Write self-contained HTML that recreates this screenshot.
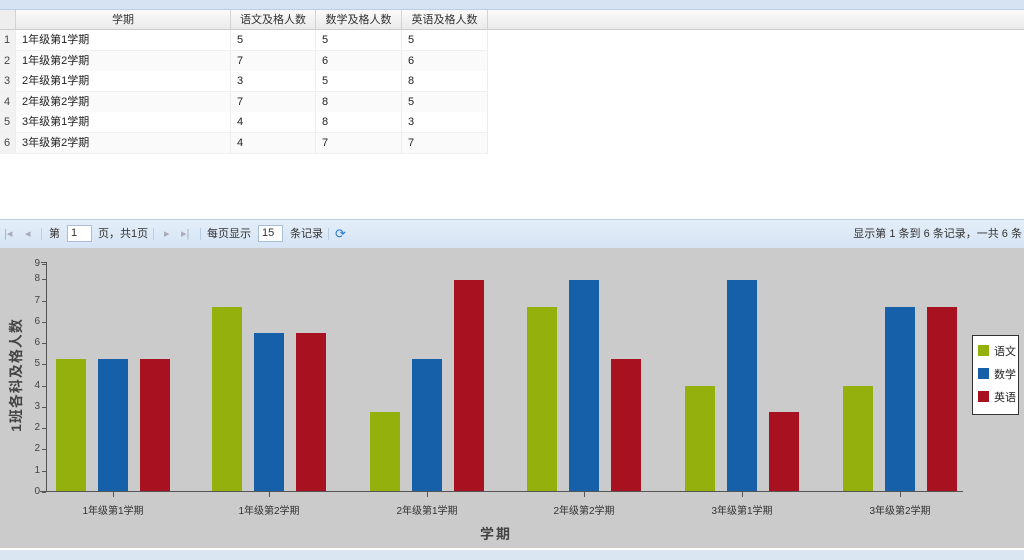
<!DOCTYPE html>
<html><head><meta charset="utf-8"><style>
*{margin:0;padding:0;box-sizing:border-box}
body{width:1024px;height:560px;overflow:hidden;background:#fff;font-family:"Liberation Sans","Noto Sans CJK SC",sans-serif;font-size:11px;color:#222;position:relative}
.a{position:absolute}
.c{position:absolute;height:21px;line-height:21px;padding-left:6px;border-right:1px solid #ededed;border-bottom:1px solid #f0f0f0}
.rn{background:#f2f2f2;color:#444;padding-left:4px}
.h{position:absolute;top:10px;height:20px;line-height:20px;text-align:center;background:linear-gradient(#fbfbfb,#eaeaea);border-right:1px solid #d3d3d3;border-bottom:1px solid #ccc;color:#333}
.bar{position:absolute;width:30px}
.g{background:#94b00c}.b{background:#1560a8}.r{background:#a8111f}
.yl{position:absolute;left:30px;width:10px;text-align:right;font-size:10px;color:#444;line-height:10px}
.xl{position:absolute;top:502px;width:120px;text-align:center;font-size:10px;color:#333}
</style></head><body>
<div class="a" style="left:0;top:0;width:1024px;height:10px;background:#d5e3f3;border-bottom:1px solid #b9cde5"></div>
<div class="h" style="left:0;width:16px;background:#eee"></div>
<div class="h" style="left:16px;width:215px">学期</div>
<div class="h" style="left:231px;width:85px">语文及格人数</div>
<div class="h" style="left:316px;width:86px">数学及格人数</div>
<div class="h" style="left:402px;width:86px">英语及格人数</div>
<div class="h" style="left:488px;width:536px;border-right:none"></div>
<div id="rows"></div>
<script>
var d=[["1年级第1学期",5,5,5],["1年级第2学期",7,6,6],["2年级第1学期",3,5,8],["2年级第2学期",7,8,5],["3年级第1学期",4,8,3],["3年级第2学期",4,7,7]];
var h="";d.forEach(function(r,i){var t=30+i*20.5;var bg=i%2?"#fafafa":"#fff";
h+='<div class="c rn" style="left:0;top:'+t+'px;width:16px">'+(i+1)+'</div>';
h+='<div class="c" style="left:16px;top:'+t+'px;width:215px;background:'+bg+'">'+r[0]+'</div>';
h+='<div class="c" style="left:231px;top:'+t+'px;width:85px;background:'+bg+'">'+r[1]+'</div>';
h+='<div class="c" style="left:316px;top:'+t+'px;width:86px;background:'+bg+'">'+r[2]+'</div>';
h+='<div class="c" style="left:402px;top:'+t+'px;width:86px;background:'+bg+'">'+r[3]+'</div>';});
document.getElementById("rows").innerHTML=h;
</script>
<div class="a" style="left:0;top:219px;width:1024px;height:29px;background:linear-gradient(#e4eef9,#d6e4f4);border-top:1px solid #b9cde5;color:#333;line-height:28px">
<span class="a" style="left:4px;color:#aab">|◂</span><span class="a" style="left:25px;color:#aab">◂</span>
<span class="a" style="left:41px;top:8px;height:12px;border-left:1px solid #b9cde5"></span>
<span class="a" style="left:49px">第</span>
<span class="a" style="left:67px;top:5px;width:25px;height:17px;background:#fff;border:1px solid #a9bfd6;line-height:15px;padding-left:3px">1</span>
<span class="a" style="left:98px">页，共1页</span>
<span class="a" style="left:153px;top:8px;height:12px;border-left:1px solid #b9cde5"></span>
<span class="a" style="left:164px;color:#aab">▸</span><span class="a" style="left:181px;color:#aab">▸|</span>
<span class="a" style="left:200px;top:8px;height:12px;border-left:1px solid #b9cde5"></span>
<span class="a" style="left:207px">每页显示</span>
<span class="a" style="left:258px;top:5px;width:25px;height:17px;background:#fff;border:1px solid #a9bfd6;line-height:15px;padding-left:3px">15</span>
<span class="a" style="left:290px">条记录</span>
<span class="a" style="left:328px;top:8px;height:12px;border-left:1px solid #b9cde5"></span>
<span class="a" style="left:335px;color:#2a7bd0;font-size:13px">⟳</span>
<span class="a" style="right:2px">显示第 1 条到 6 条记录，一共 6 条</span>
</div>
<div class="a" style="left:0;top:248px;width:1024px;height:300px;background:#cbcbcb"></div>
<div class="a" style="left:0;top:548px;width:1024px;height:12px;background:#dbe6f3;border-top:2px solid #fff"></div>
<div class="a" style="left:46px;top:262px;width:1px;height:230px;background:#555"></div>
<div class="a" style="left:41px;top:262px;width:5px;height:1px;background:#555"></div>
<div class="a" style="left:40px;top:491px;width:923px;height:1px;background:#555"></div>
<div id="chart"></div>
<script>
var ys=[[0,492],[1,471],[2,449],[2,428],[3,407],[4,386],[5,364],[6,343],[6,322],[7,301],[8,279],[9,264]];
var s="";ys.forEach(function(v){s+='<div class="yl" style="top:'+(v[1]-5)+'px">'+v[0]+'</div><div class="a" style="left:42px;top:'+v[1]+'px;width:4px;height:1px;background:#555"></div>';});
var tp={3:412,4:386,5:359,6:333,7:307,8:280};
var gx=[56,212,370,527,685,843],cl=["g","b","r"];
d.forEach(function(r,i){for(var k=0;k<3;k++){var x=gx[i]+k*42;var t=tp[r[k+1]];s+='<div class="bar '+cl[k]+'" style="left:'+x+'px;top:'+t+'px;height:'+(491-t)+'px"></div>';}
var cx=gx[i]+57;s+='<div class="a" style="left:'+cx+'px;top:492px;width:1px;height:5px;background:#555"></div><div class="xl" style="left:'+(cx-60)+'px">'+r[0]+'</div>';});
document.getElementById("chart").innerHTML=s;
</script>
<div class="a" style="left:480px;top:524px;font-size:14px;font-weight:bold;color:#444;letter-spacing:2px">学期</div>
<div class="a" style="left:-54px;top:365px;width:140px;text-align:center;transform:rotate(-90deg);font-size:14px;font-weight:bold;color:#444;letter-spacing:1px">1班各科及格人数</div>
<div class="a" style="left:972px;top:335px;width:47px;height:80px;background:#fff;border:1px solid #333;font-size:11px">
<div class="a g" style="left:5px;top:9px;width:11px;height:11px"></div><span class="a" style="left:21px;top:7px">语文</span>
<div class="a b" style="left:5px;top:32px;width:11px;height:11px"></div><span class="a" style="left:21px;top:30px">数学</span>
<div class="a r" style="left:5px;top:55px;width:11px;height:11px"></div><span class="a" style="left:21px;top:53px">英语</span>
</div>
</body></html>
